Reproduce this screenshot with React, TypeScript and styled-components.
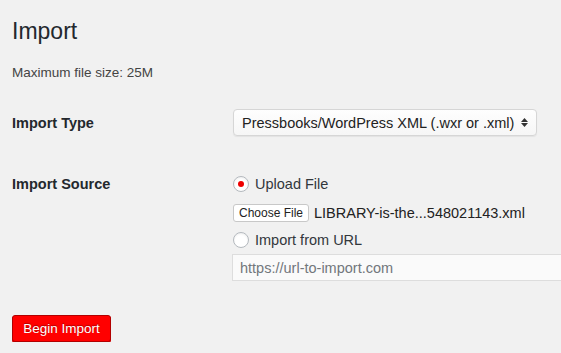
import React from 'react';
import styled, { createGlobalStyle } from 'styled-components';

const GlobalStyle = createGlobalStyle`
  html, body {
    margin: 0;
    padding: 0;
    background: #f1f1f1;
  }
  body {
    font-family: 'Liberation Sans', Arial, sans-serif;
    color: #23282d;
    font-size: 13px;
  }
`;

const Page = styled.div`
  padding: 16px 0 0 12px;
  width: 549px;
  overflow: hidden;
`;

const Title = styled.h1`
  margin: 0;
  font-size: 23px;
  font-weight: 400;
  line-height: 30px;
`;

const Note = styled.p`
  margin: 18px 0 0;
  font-size: 13.5px;
  line-height: 18px;
  color: #444;
`;

const Form = styled.div`
  display: grid;
  grid-template-columns: 221px 1fr;
  row-gap: 40px;
  margin-top: 27px;
`;

const Label = styled.div<{ top: number }>`
  font-size: 14.5px;
  font-weight: 700;
  color: #23282d;
  padding-top: ${(p) => p.top}px;
`;

const Select = styled.div`
  width: 304px;
  height: 27px;
  box-sizing: border-box;
  border: 1px solid #d6d6d6;
  border-radius: 4px;
  background: linear-gradient(#fefefe, #f6f6f6);
  box-shadow: 0 1px 1px rgba(0, 0, 0, 0.06);
  display: flex;
  align-items: center;
  justify-content: space-between;
  padding: 0 8px 0 8px;
  font-size: 14.5px;
  color: #222;
`;

const Arrows = styled.span`
  display: flex;
  flex-direction: column;
  gap: 1px;
`;

const Source = styled.div`
  display: flex;
  flex-direction: column;
`;

const RadioRow = styled.label`
  display: flex;
  align-items: center;
  gap: 6px;
  font-size: 14.5px;
  color: #32373c;
  height: 16px;
`;

const Radio = styled.span<{ checked?: boolean }>`
  width: 16px;
  height: 16px;
  box-sizing: border-box;
  border-radius: 50%;
  border: 1px solid #b4b9be;
  background: #fff;
  box-shadow: inset 0 1px 2px rgba(0, 0, 0, 0.07);
  display: flex;
  align-items: center;
  justify-content: center;
  &::after {
    content: '';
    display: ${(p) => (p.checked ? 'block' : 'none')};
    width: 6px;
    height: 6px;
    border-radius: 50%;
    background: #e00;
  }
`;

const FileRow = styled.div`
  display: flex;
  align-items: center;
  gap: 5px;
  margin: 12px 0 10px;
  font-size: 14.5px;
  color: #222;
`;

const FileButton = styled.button`
  font-family: 'Liberation Sans', Arial, sans-serif;
  font-size: 12px;
  height: 18px;
  width: 76px;
  padding: 0;
  border: 1px solid #c8c8c8;
  border-radius: 3px;
  background: #fff;
  color: #222;
  line-height: 16px;
`;

const UrlInput = styled.input`
  margin-top: 6px;
  width: 340px;
  height: 27px;
  box-sizing: border-box;
  border: 1px solid #ddd;
  background: #fafafa;
  padding: 0 7px;
  font-family: 'Liberation Sans', Arial, sans-serif;
  font-size: 14.5px;
  color: #555;
  margin-left: -1px;
  &::placeholder {
    color: #72777c;
  }
`;

const Submit = styled.button`
  margin-top: 34px;
  background: #f00;
  border: 1px solid #b20000;
  border-radius: 3px;
  color: #fff;
  font-family: 'Liberation Sans', Arial, sans-serif;
  font-size: 13.5px;
  height: 27px;
  width: 99px;
  padding: 0;
  box-shadow: 0 1px 0 #c00;
  text-shadow: 0 -1px 1px #a00;
`;

export default function App() {
  return (
    <>
      <GlobalStyle />
      <Page>
        <Title>Import</Title>
        <Note>Maximum file size: 25M</Note>
        <Form>
          <Label top={6}>Import Type</Label>
          <Select>
            <span>Pressbooks/WordPress XML (.wxr or .xml)</span>
            <Arrows>
              <svg width="7" height="4" viewBox="0 0 7 4">
                <path d="M0 4 L3.5 0 L7 4 Z" fill="#333" />
              </svg>
              <svg width="7" height="4" viewBox="0 0 7 4">
                <path d="M0 0 L3.5 4 L7 0 Z" fill="#333" />
              </svg>
            </Arrows>
          </Select>
          <Label top={0}>Import Source</Label>
          <Source>
            <RadioRow>
              <Radio checked />
              Upload File
            </RadioRow>
            <FileRow>
              <FileButton>Choose File</FileButton>
              LIBRARY-is-the...548021143.xml
            </FileRow>
            <RadioRow>
              <Radio />
              Import from URL
            </RadioRow>
            <UrlInput placeholder="https://url-to-import.com" />
          </Source>
        </Form>
        <Submit>Begin Import</Submit>
      </Page>
    </>
  );
}
